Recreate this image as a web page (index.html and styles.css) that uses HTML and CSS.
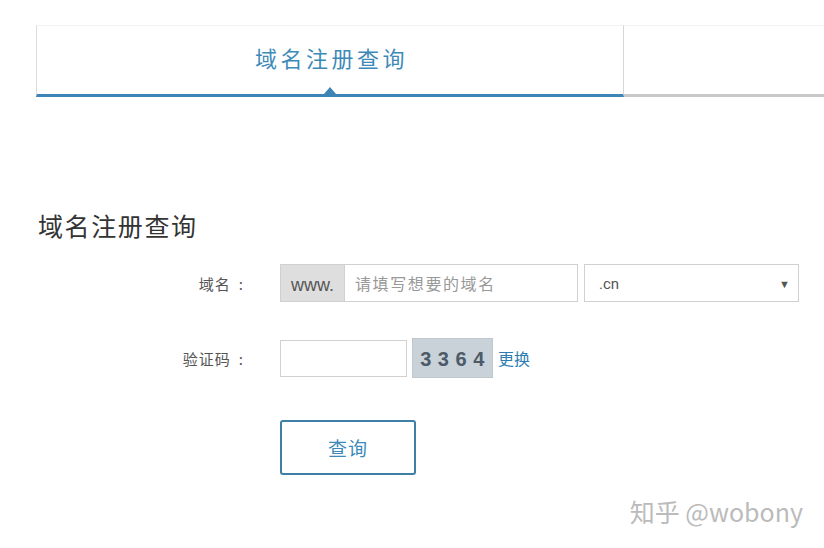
FILE: index.html
```html
<!DOCTYPE html>
<html lang="zh">
<head>
<meta charset="utf-8">
<link rel="stylesheet" href="styles.css">
</head>
<body>
<div class="page">
  <div class="tabs">
    <div class="tab active"><span>域名注册查询</span><i class="caret"></i></div>
    <div class="tab rest"></div>
  </div>

  <h2 class="title">域名注册查询</h2>

  <div class="form">
    <div class="row row-domain">
      <label class="label">域名<span class="colon">:</span></label>
      <div class="group">
        <span class="prefix">www.</span>
        <span class="text-input placeholder">请填写想要的域名</span>
      </div>
      <div class="select"><span>.cn</span><span class="arrow">▼</span></div>
    </div>

    <div class="row row-code">
      <label class="label">验证码<span class="colon">:</span></label>
      <span class="code-input"></span>
      <span class="captcha">3 3 6 4</span>
      <a class="change">更换</a>
    </div>

    <div class="row row-btn">
      <span class="label"></span>
      <button class="btn">查询</button>
    </div>
  </div>

  <div class="footer">
    <span class="watermark">知乎 @wobony</span>
  </div>
</div>
</body>
</html>
```

FILE: styles.css
```css
* { box-sizing: border-box; }
html, body { margin: 0; padding: 0; background: #fff; }
body {
  font-family: "Noto Sans CJK SC", "Noto Sans", sans-serif;
  color: #333;
  width: 824px;
  height: 548px;
  overflow: hidden;
}
.page { padding-left: 36px; }

.tabs {
  display: flex;
  margin-top: 25px;
}
.tab {
  height: 72px;
  border-top: 1px solid #f3f3f3;
}
.tab.active {
  position: relative;
  width: 588px;
  border-left: 1px solid #dcdcdc;
  border-right: 1px solid #d6d6d6;
  border-bottom: 3px solid #3f84b6;
  display: flex;
  align-items: center;
  justify-content: center;
  padding-bottom: 6px;
}
.tab.active span {
  font-size: 22px;
  letter-spacing: 3.5px;
  margin-right: -3px;
  color: #3d8ab8;
}
.caret {
  position: absolute;
  left: 287px;
  bottom: 0;
  width: 0;
  height: 0;
  border-left: 6px solid transparent;
  border-right: 6px solid transparent;
  border-bottom: 7px solid #3f84b6;
}
.tab.rest {
  flex: 1;
  border-bottom: 3px solid #c9c9c9;
}

.title {
  margin: 112px 0 0 2px;
  font-size: 25px;
  line-height: 32px;
  font-weight: normal;
  color: #333;
  letter-spacing: 1.6px;
}

.form { margin-top: 23px; }
.row {
  display: flex;
  align-items: center;
}
.label {
  width: 212px;
  margin-right: 32px;
  padding-right: 4px;
  text-align: right;
  font-size: 15px;
  color: #555;
  letter-spacing: 1px;
}
.colon { margin-left: 8px; }
.row-domain { height: 38px; }
.group {
  display: flex;
  height: 38px;
  border: 1px solid #d0d0d0;
}
.prefix {
  width: 64px;
  background: #dedede;
  border-right: 1px solid #d0d0d0;
  display: flex;
  align-items: center;
  justify-content: center;
  padding-top: 5px;
  font-family: "Liberation Sans", Arial, sans-serif;
  font-size: 18px;
  color: #555;
}
.text-input {
  width: 232px;
  display: flex;
  align-items: center;
  padding-left: 10px;
  font-size: 16px;
  letter-spacing: 1.6px;
  color: #999;
}
.select {
  width: 215px;
  height: 38px;
  margin-left: 6px;
  border: 1px solid #d0d0d0;
  display: flex;
  align-items: center;
  justify-content: space-between;
  padding: 2px 8px 0 14px;
  font-family: Roboto, "Liberation Sans", sans-serif;
  font-size: 15px;
  color: #555;
}
.arrow { font-size: 11px; color: #555; }

.row-code { margin-top: 36px; height: 40px; }
.code-input {
  width: 127px;
  height: 37px;
  border: 1px solid #d0d0d0;
}
.captcha {
  width: 81px;
  height: 40px;
  margin-left: 5px;
  background: #c9d1d9;
  border: 1px solid #bfc7cf;
  display: flex;
  align-items: center;
  justify-content: center;
  padding-top: 2px;
  font-family: "Liberation Sans", Arial, sans-serif;
  font-weight: bold;
  font-size: 20px;
  letter-spacing: 0.5px;
  color: #4d5a68;
  white-space: pre;
}
.change {
  margin-left: 5px;
  font-size: 16px;
  color: #2d7db3;
}

.row-btn { margin-top: 42px; }
.btn {
  width: 136px;
  height: 55px;
  background: #fff;
  border: 2px solid #3f7fa6;
  border-radius: 3px;
  font-family: "Noto Sans CJK SC", sans-serif;
  font-size: 19px;
  color: #3d8ab8;
  letter-spacing: 1px;
  padding: 0;
}

.footer {
  height: 74px;
  border-bottom: 1px solid #d8d8d8;
  display: flex;
  justify-content: flex-end;
  align-items: flex-start;
  padding-right: 21px;
}
.watermark {
  font-size: 25px;
  color: #bbb;
  line-height: 32px;
  margin-top: 20px;
}
```
